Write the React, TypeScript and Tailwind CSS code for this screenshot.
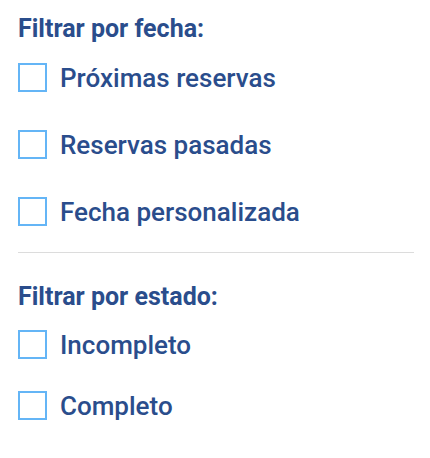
const dateOptions = ["Próximas reservas", "Reservas pasadas", "Fecha personalizada"];
const statusOptions = ["Incompleto", "Completo"];

function CheckRow({ label, rowClass }: { label: string; rowClass: string }) {
  return (
    <label className={`flex items-center ${rowClass}`}>
      <span className="w-[29px] h-[29px] border-2 border-[#64b5f6] bg-white shrink-0" />
      <span className="ml-[13px] text-[26px] leading-[30px] font-medium text-[#2a4d8c]">
        {label}
      </span>
    </label>
  );
}

export default function App() {
  return (
    <div
      className="w-[430px] h-[458px] bg-white pl-[18px] pr-[16px] pt-[15px]"
      style={{ fontFamily: "Roboto, 'Noto Sans', sans-serif" }}
    >
      {/* Filtro por fecha */}
      <h2 className="text-[25px] leading-[28px] font-bold text-[#2a4d8c]">Filtrar por fecha:</h2>
      <div className="mt-[1px]">
        {dateOptions.map((opt) => (
          <CheckRow key={opt} label={opt} rowClass="h-[67px]" />
        ))}
      </div>
      <div className="mt-[7px] h-px bg-[#dcdcdc]" />

      {/* Filtro por estado */}
      <h2 className="mt-[30px] text-[25px] leading-[28px] font-bold text-[#2a4d8c]">
        Filtrar por estado:
      </h2>
      <div className="mt-[3px]">
        {statusOptions.map((opt) => (
          <CheckRow key={opt} label={opt} rowClass="h-[61px]" />
        ))}
      </div>
    </div>
  );
}
